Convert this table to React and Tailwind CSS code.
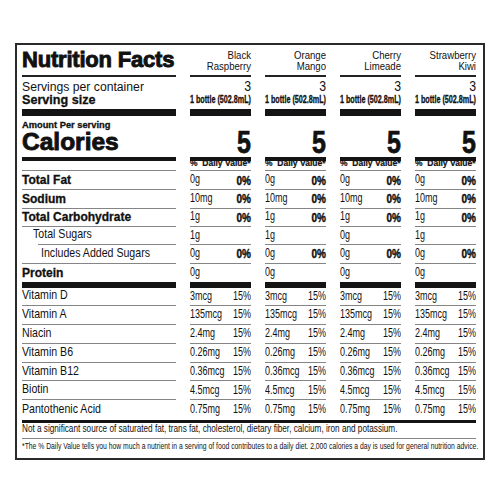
import React from "react"

// the label uses a condensed face; no narrow font is installed, so Liberation Sans is
// set at the width-matching size and stretched vertically back to its cap height
const SANS = "font-['Liberation_Sans',Arial,sans-serif]"
const COLS = "grid grid-cols-[154px_61px_61px_61px_61px] gap-x-[14px]"
const TALL = "inline-block whitespace-nowrap"

const LINES = {
    thin: "h-px bg-[#858585]",
    dark: "h-[2px] bg-[#222]",
    bar7: "h-[7px] bg-[#141414]",
    bar4: "h-[4px] bg-[#141414]",
    bar6: "h-[6px] bg-[#141414]",
    none: "",
}

const flavors = [
    ["Black", "Raspberry"],
    ["Orange", "Mango"],
    ["Cherry", "Limeade"],
    ["Strawberry", "Kiwi"],
]

const nutrients = [
    { label: "Total Fat", bold: true, values: [["0g", "0%"], ["0g", "0%"], ["0g", "0%"], ["0g", "0%"]] },
    { label: "Sodium", bold: true, values: [["10mg", "0%"], ["10mg", "0%"], ["10mg", "0%"], ["10mg", "0%"]] },
    { label: "Total Carbohydrate", bold: true, values: [["1g", "0%"], ["1g", "0%"], ["1g", "0%"], ["1g", "0%"]] },
    { label: "Total Sugars", indent: 1, values: [["1g"], ["1g"], ["0g"], ["1g"]] },
    { label: "Includes Added Sugars", indent: 2, values: [["0g", "0%"], ["0g", "0%"], ["0g", "0%"], ["0g", "0%"]] },
]

const vitamins = [
    ["Vitamin D", "3mcg"],
    ["Vitamin A", "135mcg"],
    ["Niacin", "2.4mg"],
    ["Vitamin B6", "0.26mg"],
    ["Vitamin B12", "0.36mcg"],
    ["Biotin", "4.5mcg"],
    ["Pantothenic Acid", "0.75mg"],
]

const boldLabel = `${SANS} font-bold text-[12px] [-webkit-text-stroke:0.3px_#111]`
const regLabel = `${SANS} ${TALL} text-[10.6px] scale-y-[1.13]`
const value = `${SANS} ${TALL} text-[9px] scale-y-[1.38]`
const pct = `${SANS} ${TALL} font-bold text-[10px] scale-y-[1.22] [-webkit-text-stroke:0.35px_#111]`

// one grid cell: content on top, its own rule underneath
const Cell = ({ children, line = "thin", lineIndent = "", className = "" }) => (
    <div className="flex flex-col min-w-0">
        <div className={`flex-1 flex ${className}`}>{children}</div>
        {line !== "none" && <div className={`${LINES[line]} ${lineIndent}`} />}
    </div>
)

const NutrientRow = ({ n }) => {
    const pad = n.indent === 1 ? "pl-[11px]" : n.indent === 2 ? "pl-[19px]" : ""
    return (
        <div className={`${COLS} h-[18.5px]`}>
            <Cell className={`items-center ${pad}`} lineIndent={n.indent === 1 ? "ml-[16px]" : ""}>
                <span className={n.bold ? boldLabel : regLabel}>{n.label}</span>
            </Cell>
            {n.values.map(([amount, dv], i) => (
                <Cell key={i} className="items-center justify-between">
                    <span className={value}>{amount}</span>
                    {dv && <span className={pct}>{dv}</span>}
                </Cell>
            ))}
        </div>
    )
}

export default function App() {
    return (
        <div className="w-[500px] h-[500px] bg-white text-[#111] overflow-hidden">
            <div className="ml-[15px] mt-[43px] w-[470px] border-2 border-[#2a2a2a] pl-[5px] pr-[7px] pb-[4px]">
                {/* title + flavor names */}
                <div className={`${COLS} h-[32px]`}>
                    <Cell line="dark" className="items-end pb-[4px]">
                        <span className={`${SANS} font-black text-[22px] leading-none tracking-[-0.2px] [-webkit-text-stroke:0.9px_#111]`}>
                            Nutrition Facts
                        </span>
                    </Cell>
                    {flavors.map((f) => (
                        <Cell key={f[1]} line="dark" className="flex-col items-end justify-end pb-[4px]">
                            <span className={`${SANS} ${TALL} text-[9.6px] leading-[11px] scale-y-[1.2]`}>{f[0]}</span>
                            <span className={`${SANS} ${TALL} text-[9.6px] leading-[11px] scale-y-[1.2]`}>{f[1]}</span>
                        </Cell>
                    ))}
                </div>

                {/* servings */}
                <div className={`${COLS} h-[39px]`}>
                    <Cell line="bar7" className="flex-col pt-[2px]">
                        <span className={`${SANS} ${TALL} text-[12.2px] leading-[14px] scale-y-[1.12] origin-top`}>
                            Servings per container
                        </span>
                        <span className={`${SANS} ${TALL} font-bold text-[12.6px] leading-[14px] scale-y-[1.08] [-webkit-text-stroke:0.3px_#111]`}>
                            Serving size
                        </span>
                    </Cell>
                    {flavors.map((f) => (
                        <Cell key={f[1]} line="bar7" className="flex-col items-end pt-[2px]">
                            <span className={`${SANS} ${TALL} text-[12.3px] leading-[14px] scale-y-[1.12] origin-top`}>3</span>
                            <span className={`${SANS} ${TALL} font-bold text-[7.2px] leading-[14px] scale-y-[1.6] [-webkit-text-stroke:0.2px_#111]`}>
                                1 bottle (502.8mL)
                            </span>
                        </Cell>
                    ))}
                </div>

                {/* calories */}
                <div className={`${COLS} h-[40px]`}>
                    <Cell line="bar4" className="flex-col justify-between">
                        <span className={`${SANS} font-bold text-[9.3px] leading-[10px] mt-[4px] [-webkit-text-stroke:0.3px_#111]`}>
                            Amount Per serving
                        </span>
                        <span className={`${SANS} font-black text-[24.5px] leading-none pb-[2px] [-webkit-text-stroke:0.9px_#111]`}>
                            Calories
                        </span>
                    </Cell>
                    {flavors.map((f) => (
                        <Cell key={f[1]} line="bar4" className="items-end justify-end">
                            <span className={`${SANS} ${TALL} font-bold text-[25px] leading-[24px] scale-y-[1.25] origin-bottom [-webkit-text-stroke:0.6px_#111]`}>
                                5
                            </span>
                        </Cell>
                    ))}
                </div>

                {/* % daily value header */}
                <div className={`${COLS} h-[15px]`}>
                    <Cell line="thin" />
                    {flavors.map((f) => (
                        <Cell key={f[1]} className="items-center">
                            <span className={`${SANS} font-bold text-[8.5px] whitespace-nowrap [-webkit-text-stroke:0.2px_#111]`}>
                                %&nbsp; Daily Value*
                            </span>
                        </Cell>
                    ))}
                </div>

                {nutrients.map((n) => (
                    <NutrientRow key={n.label} n={n} />
                ))}

                {/* protein */}
                <div className={`${COLS} h-[24px]`}>
                    <Cell line="bar6" className="items-center">
                        <span className={boldLabel}>Protein</span>
                    </Cell>
                    {flavors.map((f) => (
                        <Cell key={f[1]} line="bar6" className="items-center">
                            <span className={value}>0g</span>
                        </Cell>
                    ))}
                </div>

                {/* vitamins */}
                {vitamins.map(([label, amount], idx) => {
                    const last = idx === vitamins.length - 1
                    return (
                        <div key={label} className={`${COLS} ${last ? "h-[19.5px]" : "h-[18.8px]"}`}>
                            <Cell line={last ? "none" : "thin"} className="items-center">
                                <span className={regLabel}>{label}</span>
                            </Cell>
                            {flavors.map((f) => (
                                <Cell key={f[1]} line={last ? "none" : "thin"} className="items-center justify-between">
                                    <span className={value}>{amount}</span>
                                    <span className={value}>15%</span>
                                </Cell>
                            ))}
                        </div>
                    )
                })}

                <div className="h-[3px] bg-[#141414]" />

                {/* footnotes */}
                <div className="h-[15px] flex items-center">
                    <span className={`${SANS} ${TALL} text-[8.2px] scale-y-[1.22] origin-left`}>
                        Not a significant source of saturated fat, trans fat, cholesterol, dietary fiber, calcium, iron and potassium.
                    </span>
                </div>
                <div className="h-px bg-[#858585]" />
                <div className="h-[15px] flex items-center">
                    <span className={`${SANS} ${TALL} text-[6.8px] scale-y-[1.35] origin-left`}>
                        *The % Daily Value tells you how much a nutrient in a serving of food contributes to a daily diet. 2,000 calories a day is used for general nutrition advice.
                    </span>
                </div>
            </div>
        </div>
    )
}
